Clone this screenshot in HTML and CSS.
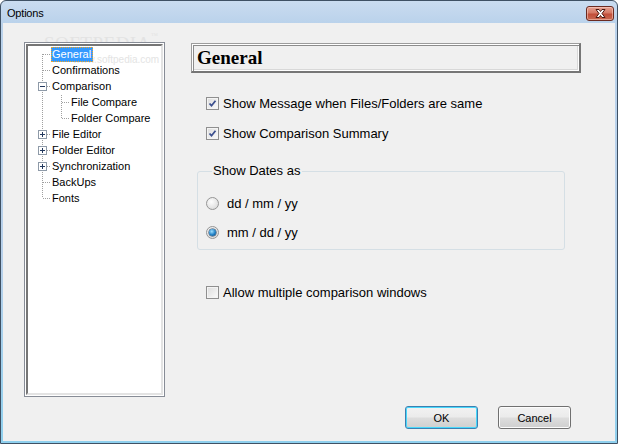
FILE: index.html
```html
<!DOCTYPE html>
<html lang="en">
<head>
    <meta charset="UTF-8">
    <title>Options</title>
    <link rel="stylesheet" href="styles.css">
</head>
<body>
    <div class="window">
        <div class="titlebar">
            <span class="title">Options</span>
            <button class="close-btn" aria-label="Close">
                <svg width="15" height="11" viewBox="0 0 15 11">
                    <path d="M3 1.5h3l1.5 2 1.5-2h3l-3 4 3 4h-3l-1.5-2-1.5 2h-3l3-4z" fill="#fff" stroke="#4a1a12" stroke-width="1" stroke-linejoin="round"/>
                </svg>
            </button>
        </div>

        <div class="client">
            <div class="watermark">SOFTPEDIA<sup>™</sup></div>

            <div class="main">
                <div class="tree">
                    <div class="tree-inner">
                        <svg class="tree-lines" width="133" height="347" viewBox="0 0 133 347" shape-rendering="crispEdges">
                            <g stroke="#a0a0a0" stroke-width="1" stroke-dasharray="1 1" fill="none">
                                <path d="M14.5 8V152"/>
                                <path d="M15 8.5H23M15 24.5H23M19 40.5H23M19 88.5H23M19 104.5H23M19 120.5H23M15 136.5H23M15 152.5H23"/>
                                <path d="M33.5 49V72"/>
                                <path d="M34 56.5H42M34 72.5H42"/>
                            </g>
                            <g fill="#fff" stroke="#8e9aa8">
                                <rect x="10.5" y="36.5" width="8" height="8"/>
                                <rect x="10.5" y="84.5" width="8" height="8"/>
                                <rect x="10.5" y="100.5" width="8" height="8"/>
                                <rect x="10.5" y="116.5" width="8" height="8"/>
                            </g>
                            <g stroke="#23395e" fill="none">
                                <path d="M12 40.5H17"/>
                                <path d="M12 88.5H17M14.5 86V91"/>
                                <path d="M12 104.5H17M14.5 102V107"/>
                                <path d="M12 120.5H17M14.5 118V123"/>
                            </g>
                        </svg>
                        <div class="watermark-url">www.softpedia.com</div>
                        <div class="tree-item"><span class="label selected">General</span></div>
                        <div class="tree-item"><span class="label">Confirmations</span></div>
                        <div class="tree-item"><span class="label">Comparison</span></div>
                        <div class="tree-item sub"><span class="label">File Compare</span></div>
                        <div class="tree-item sub"><span class="label">Folder Compare</span></div>
                        <div class="tree-item"><span class="label">File Editor</span></div>
                        <div class="tree-item"><span class="label">Folder Editor</span></div>
                        <div class="tree-item"><span class="label">Synchronization</span></div>
                        <div class="tree-item"><span class="label">BackUps</span></div>
                        <div class="tree-item"><span class="label">Fonts</span></div>
                    </div>
                </div>

                <div class="page">
                    <div class="page-header">General</div>

                    <div class="options">
                        <label class="check-row first">
                            <span class="checkbox checked">
                                <svg width="13" height="13" viewBox="0 0 13 13"><path d="M3.5 6.5l2 2.2 4-5" stroke="#3b4f8e" stroke-width="1.8" fill="none"/></svg>
                            </span>
                            Show Message when Files/Folders are same
                        </label>
                        <label class="check-row second">
                            <span class="checkbox checked">
                                <svg width="13" height="13" viewBox="0 0 13 13"><path d="M3.5 6.5l2 2.2 4-5" stroke="#3b4f8e" stroke-width="1.8" fill="none"/></svg>
                            </span>
                            Show Comparison Summary
                        </label>

                        <fieldset class="group">
                            <legend>Show Dates as</legend>
                            <label class="radio-row first">
                                <span class="radio"></span>
                                dd / mm / yy
                            </label>
                            <label class="radio-row second">
                                <span class="radio checked"></span>
                                mm / dd / yy
                            </label>
                        </fieldset>

                        <label class="check-row allow">
                            <span class="checkbox"></span>
                            Allow multiple comparison windows
                        </label>
                    </div>
                </div>
            </div>

            <div class="footer">
                <button class="btn default">OK</button>
                <button class="btn">Cancel</button>
            </div>
        </div>
    </div>
</body>
</html>
```

FILE: styles.css
```css
* {
    margin: 0;
    padding: 0;
    box-sizing: border-box;
}

body {
    width: 618px;
    height: 444px;
    overflow: hidden;
    font-family: "Liberation Sans", Arial, sans-serif;
    color: #000;
    background: #fff;
}

.window {
    width: 618px;
    height: 444px;
    border: 1px solid #3f5164;
    border-radius: 6px 6px 0 0;
    padding: 0 2px 2px 2px;
    background: linear-gradient(#cadcf0 0, #bad2eb 22px, #b7d0ea 60%, #8fd0ee 100%);
}

/* title bar */
.titlebar {
    height: 22px;
    display: flex;
    align-items: center;
    justify-content: space-between;
    padding-left: 4px;
}

.title {
    font-size: 11px;
    color: #000;
    letter-spacing: -0.2px;
    margin-top: 1px;
}

.close-btn {
    width: 28px;
    height: 15px;
    margin-right: 1px;
    margin-top: 2px;
    border: 1px solid #6b2a20;
    border-radius: 3px;
    background: linear-gradient(#e6a090 0%, #d57a66 45%, #c24f3a 55%, #c96a52 100%);
    box-shadow: inset 0 0 0 1px rgba(255, 220, 210, 0.5);
    display: flex;
    align-items: center;
    justify-content: center;
}

.close-btn svg {
    display: block;
}

/* client area */
.client {
    position: relative;
    height: 418px;
    background: #f0f0f0;
    padding: 19px 0 0 21px;
    overflow: hidden;
}

.watermark {
    position: absolute;
    left: 41px;
    top: 2px;
    font-family: "Liberation Serif", serif;
    font-size: 19px;
    line-height: 22px;
    letter-spacing: 0.5px;
    color: #e3e3e3;
    pointer-events: none;
}

.watermark sup {
    font-size: 7px;
    vertical-align: 12px;
}

.watermark-url {
    position: absolute;
    left: 45px;
    top: 9px;
    font-size: 10px;
    line-height: 10px;
    color: #e4e4e4;
    pointer-events: none;
}

.main {
    display: flex;
    align-items: flex-start;
}

/* tree view */
.tree {
    position: relative;
    z-index: 1;
    width: 141px;
    height: 355px;
    border: 1px solid #878c96;
    padding: 1px;
    background: #fff;
}

.tree-inner {
    position: relative;
    height: 100%;
    border-style: solid;
    border-width: 2px;
    border-color: #767676 #e3e3e3 #e3e3e3 #767676;
    background: #fff;
    font-size: 11px;
}

.tree-lines {
    position: absolute;
    left: 0;
    top: 0;
}

.tree-item {
    position: relative;
    height: 16px;
    display: flex;
    align-items: center;
    padding-left: 23px;
    white-space: nowrap;
}

.tree-item.sub {
    padding-left: 42px;
}

.label {
    line-height: 13px;
    border: 1px dotted transparent;
    padding: 0 1px 0 0;
}

.label.selected {
    background: #3399ff;
    color: #fff;
    border-color: #f5a623;
}

/* right page */
.page {
    width: 390px;
    margin-left: 26px;
    margin-top: 1px;
}

.page-header {
    position: relative;
    height: 30px;
    border-style: solid;
    border-width: 1px 2px 2px 1px;
    border-color: #9c9c9c #767676 #767676 #9c9c9c;
    box-shadow: inset 1px 1px 0 #fff, inset 2px 2px 0 #8c8c8c, inset -1px -1px 0 #fff, inset -2px -2px 0 #d8d8d8;
    font-family: "Liberation Serif", "Times New Roman", serif;
    font-weight: bold;
    font-size: 19px;
    line-height: 27px;
    padding-left: 5px;
}

.options {
    padding-left: 15px;
    font-size: 13px;
}

.check-row,
.radio-row {
    display: flex;
    align-items: center;
    height: 16px;
    white-space: nowrap;
}

.check-row.first {
    margin-top: 22px;
}

.check-row.second {
    margin-top: 14px;
}

.check-row.allow {
    margin-top: 34px;
}

.checkbox {
    width: 13px;
    height: 13px;
    margin-right: 4px;
    border: 1px solid #8f8f8f;
    background: linear-gradient(135deg, #dcdcdc, #fbfbfb);
    box-shadow: inset 0 0 0 1px #f4f4f4;
    position: relative;
}

.checkbox svg {
    position: absolute;
    left: -1px;
    top: -1px;
}

.group {
    margin: 23px 0 0 -9px;
    width: 368px;
    border: 1px solid #d5dfe5;
    border-radius: 3px;
    padding: 0 0 9px 8px;
}

.group legend {
    margin-left: 6px;
    padding: 0 2px 0 1px;
    line-height: 14px;
}

.radio-row.first {
    margin-top: 17px;
}

.radio-row.second {
    margin-top: 13px;
}

.radio {
    width: 13px;
    height: 13px;
    margin-right: 8px;
    border: 1px solid #959595;
    border-radius: 50%;
    background: radial-gradient(circle at 40% 35%, #fdfdfd, #d4d4d4);
    position: relative;
}

.radio.checked::after {
    content: "";
    position: absolute;
    left: 2px;
    top: 2px;
    width: 7px;
    height: 7px;
    border-radius: 50%;
    background: radial-gradient(circle at 40% 35%, #9fe0ff, #1f7fc4 55%, #0d3f6e);
    box-shadow: 0 0 0 0.5px #223a55;
}

/* buttons */
.footer {
    display: flex;
    justify-content: flex-end;
    gap: 20px;
    padding-right: 44px;
    margin-top: 9px;
}

.btn {
    width: 73px;
    height: 23px;
    font-family: "Liberation Sans", Arial, sans-serif;
    font-size: 11px;
    color: #000;
    border: 1px solid #707070;
    border-radius: 3px;
    background: linear-gradient(#f2f2f2 0%, #ebebeb 48%, #dddddd 52%, #cfcfcf 100%);
    box-shadow: inset 0 0 0 1px #fcfcfc;
}

.btn.default {
    border-color: #3c7fb1;
    box-shadow: inset 0 0 0 1px #48d8fb;
}
```
